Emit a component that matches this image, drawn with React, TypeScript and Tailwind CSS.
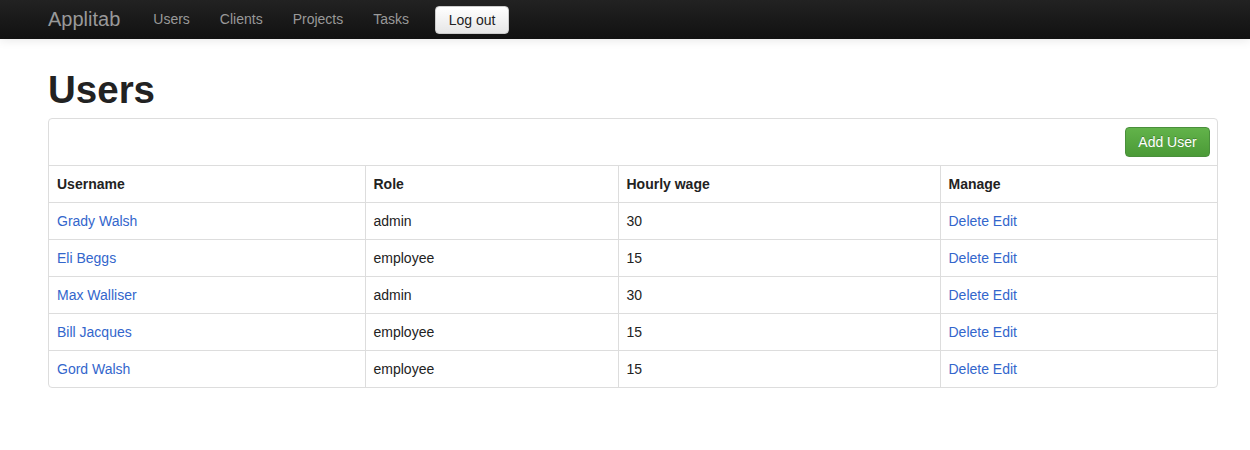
import React from 'react';

const users = [
  { name: 'Grady Walsh', role: 'admin', wage: 30 },
  { name: 'Eli Beggs', role: 'employee', wage: 15 },
  { name: 'Max Walliser', role: 'admin', wage: 30 },
  { name: 'Bill Jacques', role: 'employee', wage: 15 },
  { name: 'Gord Walsh', role: 'employee', wage: 15 },
];

export default function App() {
  return (
    <div className="min-h-[450px] bg-white text-[14px] leading-5 text-[#333]" style={{ fontFamily: '"Liberation Sans", Arial, sans-serif' }}>
      {/* Navbar */}
      <div className="h-[39px] bg-gradient-to-b from-[#222] to-[#111] shadow-[0_1px_10px_rgba(0,0,0,0.1)]">
        <div className="ml-[48px] flex h-full items-center">
          <a className="pr-[18px] text-[20px] leading-[39px] text-[#999]">Applitab</a>
          <a className="px-[15px] leading-[39px] text-[#999]">Users</a>
          <a className="px-[15px] leading-[39px] text-[#999]">Clients</a>
          <a className="px-[15px] leading-[39px] text-[#999]">Projects</a>
          <a className="px-[15px] leading-[39px] text-[#999]">Tasks</a>
          <button className="ml-[11px] h-[28px] w-[74px] rounded-[4px] border border-[#ccc] bg-gradient-to-b from-white to-[#e6e6e6] text-[14px] text-[#222]">
            Log out
          </button>
        </div>
      </div>

      <div className="ml-[48px] w-[1170px] pt-[31px]">
        <h1 className="mb-[8px] text-[38.5px] font-bold leading-10 text-[#222]">Users</h1>

        <div className="overflow-hidden rounded-[4px] border border-[#ddd]">
          <div className="flex h-[46px] items-center justify-end pr-[7px]">
            <button className="h-[30px] w-[85px] rounded-[4px] border border-[#4a8f3c] bg-gradient-to-b from-[#62b34a] to-[#4b9a37] text-[14px] text-white [text-shadow:0_-1px_0_rgba(0,0,0,0.25)]">
              Add User
            </button>
          </div>
          <table className="w-full border-collapse">
            <thead>
              <tr className="border-t border-[#ddd]">
                <th className="w-[316px] px-[8px] py-[8px] text-left font-bold text-[#222]">Username</th>
                <th className="w-[253px] border-l border-[#ddd] px-[8px] py-[8px] text-left font-bold text-[#222]">Role</th>
                <th className="w-[322px] border-l border-[#ddd] px-[8px] py-[8px] text-left font-bold text-[#222]">Hourly wage</th>
                <th className="border-l border-[#ddd] px-[8px] py-[8px] text-left font-bold text-[#222]">Manage</th>
              </tr>
            </thead>
            <tbody>
              {users.map(u => (
                <tr key={u.name} className="border-t border-[#ddd]">
                  <td className="px-[8px] py-[8px] text-[#3366cc]">{u.name}</td>
                  <td className="border-l border-[#ddd] px-[8px] py-[8px] text-[#222]">{u.role}</td>
                  <td className="border-l border-[#ddd] px-[8px] py-[8px] text-[#222]">{u.wage}</td>
                  <td className="border-l border-[#ddd] px-[8px] py-[8px] text-[#3366cc]">
                    <a>Delete</a> <a>Edit</a>
                  </td>
                </tr>
              ))}
            </tbody>
          </table>
        </div>
      </div>
    </div>
  );
}
